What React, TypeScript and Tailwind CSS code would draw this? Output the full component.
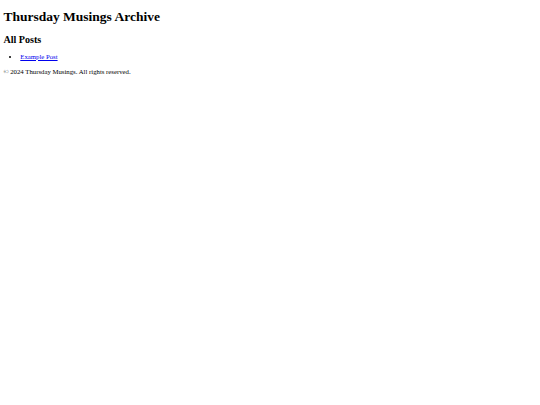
export default function App() {
  return (
    <div className="bg-white min-h-[405px] px-[3.4px] pt-px text-black font-['Liberation_Serif',serif]">
      <header>
        <h1 className="text-[13.5px] leading-[1.15] font-bold mt-[8px] mb-[9px]">Thursday Musings Archive</h1>
      </header>
      <main>
        <h2 className="text-[10.125px] leading-[1.15] font-bold mt-[8.4px] mb-[7.4px]">All Posts</h2>
        <ul className="list-disc pl-[16.9px] mt-[6px] mb-[7.5px] text-[6.75px] leading-[1.15]">
          <li>
            <a href="#" className="text-[#0000ee] underline">Example Post</a>
          </li>
        </ul>
      </main>
      <footer>
        <p className="text-[6.75px] leading-[1.15] mt-[7.5px] mb-[6.75px]">© 2024 Thursday Musings. All rights reserved.</p>
      </footer>
    </div>
  );
}
